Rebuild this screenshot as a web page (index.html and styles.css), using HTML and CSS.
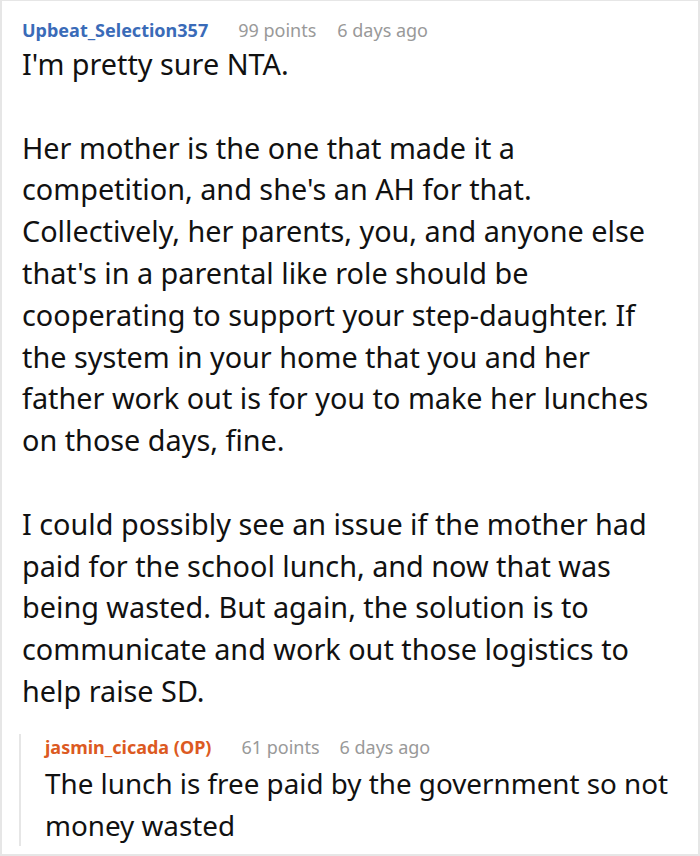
FILE: index.html
```html
<!DOCTYPE html>
<html>
<head>
<meta charset="utf-8">
<link rel="stylesheet" href="styles.css">
</head>
<body>
<div class="frame">
  <div class="comment">
    <div class="meta">
      <span class="user">Upbeat_Selection357</span>
      <span class="info points">99 points</span>
      <span class="info">6 days ago</span>
    </div>
    <div class="body">
      <p>I'm pretty sure NTA.</p>
      <p>Her mother is the one that made it a competition, and she's an AH for that. Collectively, her parents, you, and anyone else that's in a parental like role should be cooperating to support your step-daughter. If the system in your home that you and her father work out is for you to make her lunches on those days, fine.</p>
      <p>I could possibly see an issue if the mother had paid for the school lunch, and now that was being wasted. But again, the solution is to communicate and work out those logistics to help raise SD.</p>
    </div>
    <div class="reply">
      <div class="meta reply-meta">
        <span class="user op">jasmin_cicada (OP)</span>
        <span class="info points">61 points</span>
        <span class="info">6 days ago</span>
      </div>
      <div class="body reply-body">
        <p>The lunch is free paid by the government so not money wasted</p>
      </div>
    </div>
  </div>
</div>
</body>
</html>
```
FILE: styles.css
```css
html, body {
  margin: 0;
  padding: 0;
  background: #ffffff;
}
body {
  font-family: "Noto Sans", "Open Sans", sans-serif;
  color: #111111;
}
.frame {
  width: 700px;
  height: 856px;
  box-sizing: border-box;
  border: 2px solid #e6e6e6;
  border-top-width: 1px;
  overflow: hidden;
}
.comment {
  padding: 16px 0 0 20px;
}
.meta {
  display: flex;
  font-size: 18px;
  line-height: 26px;
  align-items: baseline;
}
.user {
  font-weight: 700;
  color: #3a6bb8;
  margin-right: 30px;
}
.info {
  color: #999999;
}
.points {
  margin-right: 21px;
}
.body {
  width: 651px;
  font-size: 28.8px;
  line-height: 41.8px;
}
.body p {
  margin: 0 0 41.8px 0;
}
.body p:last-child {
  margin-bottom: 0;
}
.reply {
  margin-top: 22px;
  margin-left: -3px;
  border-left: 2px solid #e6e6e6;
  padding-left: 24px;
}
.reply-meta .user {
  margin-right: 30px;
}
.reply-meta .points {
  margin-right: 20px;
}
.op {
  color: #dc5a22;
}
.reply-body {
  width: 640px;
  font-size: 27.8px;
  margin-top: 3px;
}
```
